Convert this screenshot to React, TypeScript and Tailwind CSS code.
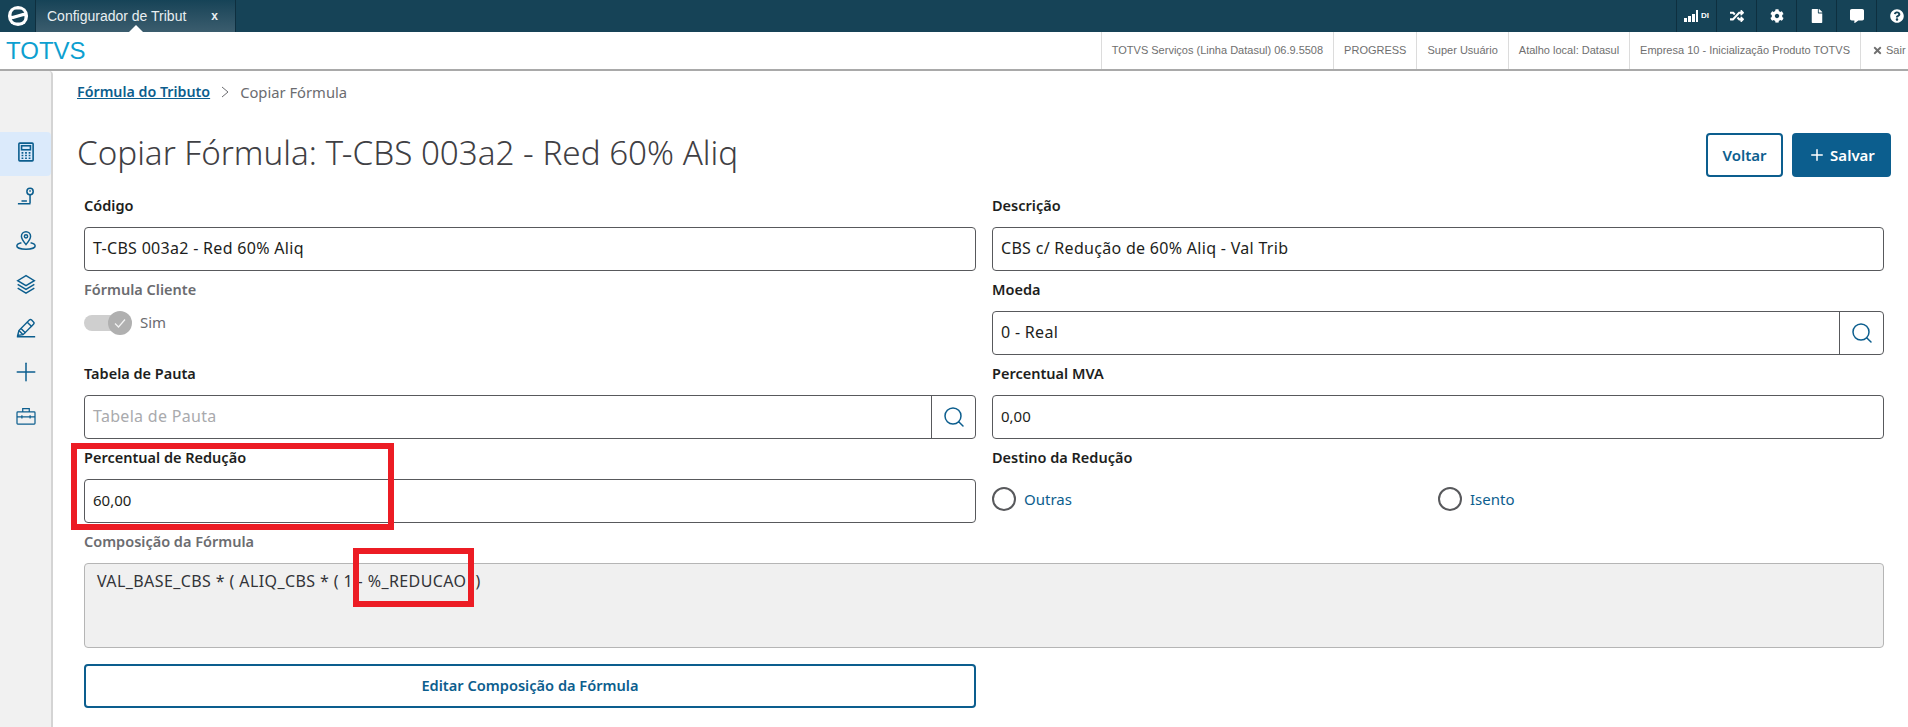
import { Plus, Search } from "lucide-react"
import { ReactNode } from "react"
import { FaCog, FaCommentAlt, FaFile, FaQuestionCircle, FaRandom, FaTimes } from "react-icons/fa"

const headerItems = [
  "TOTVS Serviços (Linha Datasul) 06.9.5508",
  "PROGRESS",
  "Super Usuário",
  "Atalho local: Datasul",
  "Empresa 10 - Inicialização Produto TOTVS",
]

function Label({ children, muted }: { children: ReactNode; muted?: boolean }) {
  return (
    <div className={`mb-2 h-6 text-[14.5px] leading-[21px] font-semibold ${muted ? "text-[#6b6c70]" : "text-[#1d1e20]"}`}>
      {children}
    </div>
  )
}

function Input({ value, placeholder, lookup, numeric }: { value?: string; placeholder?: string; lookup?: boolean; numeric?: boolean }) {
  return (
    <div className="flex h-11 items-center rounded border border-[#58595c] bg-white">
      <div
        className={`flex-1 px-2 pb-[2px] ${numeric ? "text-[15px]" : "text-[16px] tracking-[0.3px]"} ${value ? "text-[#1d1e20]" : "text-[#a9aaad]"}`}
      >
        {value ?? placeholder}
      </div>
      {lookup && (
        <div className="flex h-full w-[44px] items-center justify-center border-l border-[#58595c]">
          <Search className="h-6 w-6 text-[#0c5e8e]" strokeWidth={1.5} />
        </div>
      )}
    </div>
  )
}

function Radio({ label }: { label: string }) {
  return (
    <div className="flex flex-1 items-center gap-2">
      <div className="h-6 w-6 rounded-full border-2 border-[#58595c]" />
      <span className="text-[15px] text-[#0c5e8e]">{label}</span>
    </div>
  )
}

function TopIcon({ children }: { children: ReactNode }) {
  return <div className="flex w-10 items-center justify-center border-l border-[#0e2f3f] text-white">{children}</div>
}

function SideIcon({ children, active }: { children: ReactNode; active?: boolean }) {
  return (
    <div className={`flex h-[44px] items-center justify-center rounded-r pb-1 text-[#0c5e8e] ${active ? "bg-[#dbeafb]" : ""}`}>
      {children}
    </div>
  )
}

export default function App() {
  return (
    <div className="relative h-[727px] w-[1908px] overflow-hidden bg-white font-['Noto_Sans',sans-serif]">
      <div className="flex h-8 bg-[#164357]">
        <div className="flex w-[36px] items-center justify-center border-r border-[#0e2f3f]">
          <svg viewBox="0 0 24 24" className="h-[22px] w-[22px]">
            <circle cx="12" cy="12" r="11" fill="white" />
            <rect x="5" y="5" width="14" height="14" rx="5" fill="#164357" />
            <path d="M3 14 C9 14 15 10 21 10" fill="none" stroke="white" strokeWidth="3.5" />
          </svg>
        </div>
        <div className="relative flex w-[200px] items-center justify-between border-r border-[#0e2f3f] bg-gradient-to-b from-[#164357] to-[#3b5d6e] pr-[17px] pl-[11px] font-['Liberation_Sans',sans-serif] text-[14px] text-[#e8eef1]">
          <span>Configurador de Tribut</span>
          <span className="text-[12px] font-bold">x</span>
          <div className="absolute bottom-0 left-[93px] h-0 w-0 border-x-[7px] border-b-[7px] border-x-transparent border-b-white" />
        </div>
        <div className="ml-auto flex">
          <div className="flex w-10 items-center justify-center gap-[3px] border-l border-[#0e2f3f] text-white">
            <div className="flex items-end gap-[1px]">
              <div className="h-1 w-[3px] bg-white" />
              <div className="h-[6px] w-[3px] bg-white" />
              <div className="h-2 w-[3px] bg-white" />
              <div className="h-3 w-[2px] bg-white" />
            </div>
            <span className="font-['Liberation_Sans',sans-serif] text-[8px] leading-none font-bold">DI</span>
          </div>
          <TopIcon><FaRandom className="h-[14px] w-[14px]" /></TopIcon>
          <TopIcon><FaCog className="h-[14px] w-[14px]" /></TopIcon>
          <TopIcon><FaFile className="h-[14px] w-[12px]" /></TopIcon>
          <TopIcon><FaCommentAlt className="h-[14px] w-[14px]" /></TopIcon>
          <div className="flex w-8 items-center justify-start border-l border-[#0e2f3f] pl-[13px] text-white">
            <FaQuestionCircle className="h-[14px] w-[14px]" />
          </div>
        </div>
      </div>

      <div className="flex h-[39px] items-center border-b-2 border-[#a9a9a9] bg-white font-['Liberation_Sans',sans-serif]">
        <span className="pl-[6px] text-[24px] text-[#0d9fd0]">TOTVS</span>
        <div className="ml-auto flex h-full text-[11px] text-[#6f6f6f]">
          {headerItems.map(item => (
            <div key={item} className="flex items-center border-l border-[#dcdcdc] px-[10px]">{item}</div>
          ))}
          <div className="flex w-[48px] items-center gap-[3px] border-l border-[#dcdcdc] pl-[11px]">
            <FaTimes className="h-[11px] w-[11px]" />
            <span>Sair</span>
          </div>
        </div>
      </div>

      <div className="flex h-[656px]">
        <aside className="flex w-[53px] flex-col rounded-tr border-r-2 border-[#d4d4d4] bg-[#f1f1f1] pt-[61px]">
          <SideIcon active>
            <svg viewBox="0 0 18 22" className="h-5 w-4" fill="none" stroke="currentColor" strokeWidth="1.8">
              <rect x="1" y="1" width="16" height="20" rx="1" />
              <rect x="4" y="4" width="10" height="4.5" />
              <path d="M4 12h2M8 12h2M12 12h2M4 15h2M8 15h2M12 15h2M4 18h2M8 18h2M12 18h2" />
            </svg>
          </SideIcon>
          <SideIcon>
            <svg viewBox="0 0 20 20" className="h-[18px] w-[18px]" fill="none" stroke="currentColor" strokeWidth="1.7">
              <circle cx="14.5" cy="5" r="3.5" />
              <path d="M14.5 3.5v1.8M14.5 8.5v9.500M1 18.500h14M5 15.500h6" />
            </svg>
          </SideIcon>
          <SideIcon>
            <svg viewBox="0 0 24 24" className="h-[22px] w-[22px]" fill="none" stroke="currentColor" strokeWidth="1.6">
              <path d="M12 17c-3-3.500-5-6-5-9a5 5 0 0 1 10 0c0 3-2 5.500-5 9z" />
              <circle cx="12" cy="8" r="1.800" />
              <path d="M7 15c-3 .7-5 2-5 3.500C2 20.500 6.500 22 12 22s10-1.500 10-3.500c0-1.500-2-2.800-5-3.500" />
            </svg>
          </SideIcon>
          <SideIcon>
            <svg viewBox="0 0 24 24" className="h-5 w-5" fill="none" stroke="currentColor" strokeWidth="1.7">
              <path d="M12 2 2 8l10 6 10-6z" />
              <path d="m2 12.500 10 6 10-6M2 17l10 6 10-6" />
            </svg>
          </SideIcon>
          <SideIcon>
            <svg viewBox="0 0 24 24" className="h-5 w-5" fill="none" stroke="currentColor" strokeWidth="1.7">
              <path d="M1 22.500h22M2 21l1.500-6L16 2.500a2 2 0 0 1 2.800 0l2.200 2.200a2 2 0 0 1 0 2.800L8.500 20z" />
              <path d="m13.500 5 5.500 5.500M3.500 15 8.500 20M6 12.500l5.500 5.500" />
            </svg>
          </SideIcon>
          <SideIcon>
            <Plus className="h-[30px] w-[30px]" strokeWidth={1.2} />
          </SideIcon>
          <SideIcon>
            <svg viewBox="0 0 24 22" className="h-[18px] w-[22px]" fill="none" stroke="currentColor" strokeWidth="1.5">
              <rect x="1" y="6" width="22" height="15" rx="1" />
              <path d="M8 6V2h8v4M1 12h22M7 10v4M17 10v4" />
            </svg>
          </SideIcon>
        </aside>

        <main className="flex-1 pr-[17px] pl-[24px]">
          <div className="flex h-[42px] items-center gap-[11px]">
            <span className="text-[14.25px] font-semibold text-[#0c5e8e] underline">Fórmula do Tributo</span>
            <svg viewBox="0 0 8 12" className="h-3 w-2 text-[#6b6c70]" fill="none" stroke="currentColor" strokeWidth="1">
              <path d="m1 1 6 5-6 5" />
            </svg>
            <span className="text-[14.75px] text-[#6b6c70]">Copiar Fórmula</span>
          </div>

          <div className="mt-5 flex h-11 items-center justify-between">
            <h1 className="pb-1 text-[33.2px] font-light text-[#3f4044]">Copiar Fórmula: T-CBS 003a2 - Red 60% Aliq</h1>
            <div className="flex gap-[9px] text-[15px] font-semibold">
              <button className="h-11 w-[77px] rounded border-2 border-[#0c5e8e] text-[#0c5e8e]">Voltar</button>
              <button className="flex h-11 w-[99px] items-center justify-center gap-1 rounded bg-[#0c5e8e] text-white">
                <Plus className="h-[18px] w-[18px]" strokeWidth={2} />
                Salvar
              </button>
            </div>
          </div>

          <div className="mt-[18px] grid grid-cols-2 gap-x-4 gap-y-2 px-[7px]">
            <div>
              <Label>Código</Label>
              <Input value="T-CBS 003a2 - Red 60% Aliq" />
            </div>
            <div>
              <Label>Descrição</Label>
              <Input value="CBS c/ Redução de 60% Aliq - Val Trib" />
            </div>
            <div>
              <Label muted>Fórmula Cliente</Label>
              <div className="flex h-6 items-center gap-2">
                <div className="relative h-4 w-12 rounded-full">
                  <div className="h-4 w-11 rounded-full bg-[#cfcfcf]" />
                  <div className="absolute top-[-4px] right-0 flex h-6 w-6 items-center justify-center rounded-full bg-[#b0b0b0]">
                    <svg viewBox="0 0 14 14" className="h-[14px] w-[14px]" fill="none" stroke="#f3f3f3" strokeWidth="1.25">
                      <path d="m2 7.500 3.500 3.500L12 3.500" />
                    </svg>
                  </div>
                </div>
                <span className="pb-[2px] text-[15px] text-[#6b6c70]">Sim</span>
              </div>
            </div>
            <div>
              <Label>Moeda</Label>
              <Input value="0 - Real" lookup />
            </div>
            <div>
              <Label>Tabela de Pauta</Label>
              <Input placeholder="Tabela de Pauta" lookup />
            </div>
            <div>
              <Label>Percentual MVA</Label>
              <Input value="0,00" numeric />
            </div>
            <div>
              <Label>Percentual de Redução</Label>
              <Input value="60,00" numeric />
            </div>
            <div>
              <Label>Destino da Redução</Label>
              <div className="flex h-8 pt-2">
                <Radio label="Outras" />
                <Radio label="Isento" />
              </div>
            </div>
            <div className="col-span-2">
              <Label muted>Composição da Fórmula</Label>
              <div className="h-[85px] rounded border border-[#b5b5b5] bg-[#f0f0f0] px-3 py-[5px] text-[16px] tracking-[0.4px] text-[#333438]">
                VAL_BASE_CBS * ( ALIQ_CBS * ( 1 - %_REDUCAO&nbsp; )
              </div>
            </div>
            <button className="mt-2 h-11 rounded border-2 border-[#0c5e8e] text-[14.6px] font-semibold text-[#0c5e8e]">
              Editar Composição da Fórmula
            </button>
          </div>
        </main>
      </div>

      <div className="absolute top-[443px] left-[71px] h-[87px] w-[323px] border-[6px] border-[#ec1c24]" />
      <div className="absolute top-[548px] left-[353px] h-[59px] w-[121px] border-[6px] border-[#ec1c24]" />
    </div>
  )
}
